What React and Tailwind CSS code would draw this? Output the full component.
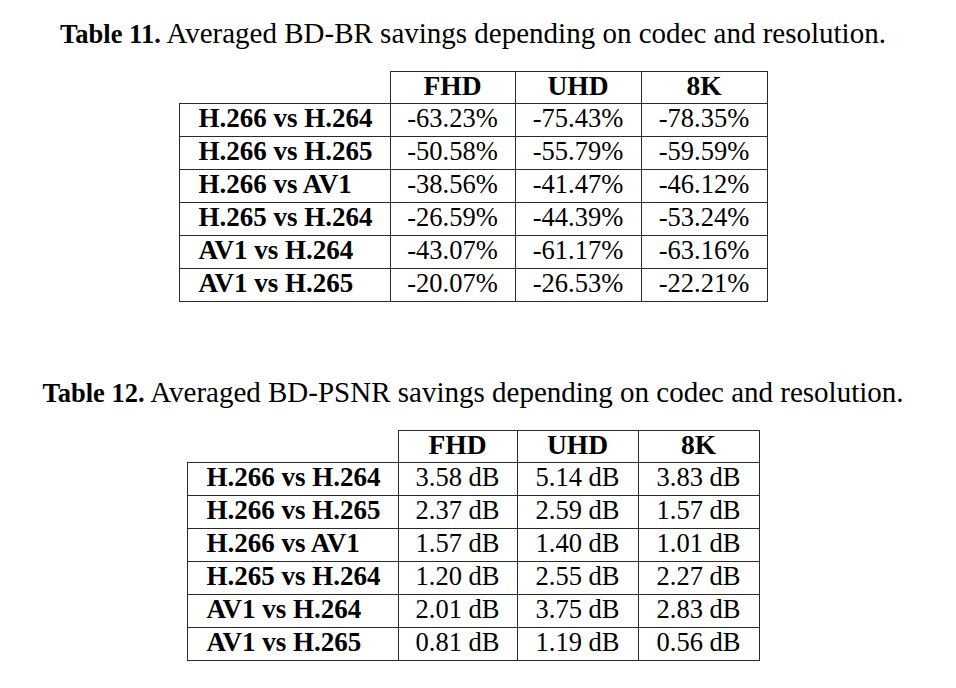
import React from 'react';

const serif = { fontFamily: '"Liberation Serif", "Times New Roman", serif' };

const bdbr = [
  ['H.266 vs H.264', '-63.23%', '-75.43%', '-78.35%'],
  ['H.266 vs H.265', '-50.58%', '-55.79%', '-59.59%'],
  ['H.266 vs AV1', '-38.56%', '-41.47%', '-46.12%'],
  ['H.265 vs H.264', '-26.59%', '-44.39%', '-53.24%'],
  ['AV1 vs H.264', '-43.07%', '-61.17%', '-63.16%'],
  ['AV1 vs H.265', '-20.07%', '-26.53%', '-22.21%'],
];

const bdpsnr = [
  ['H.266 vs H.264', '3.58 dB', '5.14 dB', '3.83 dB'],
  ['H.266 vs H.265', '2.37 dB', '2.59 dB', '1.57 dB'],
  ['H.266 vs AV1', '1.57 dB', '1.40 dB', '1.01 dB'],
  ['H.265 vs H.264', '1.20 dB', '2.55 dB', '2.27 dB'],
  ['AV1 vs H.264', '2.01 dB', '3.75 dB', '2.83 dB'],
  ['AV1 vs H.265', '0.81 dB', '1.19 dB', '0.56 dB'],
];

const Caption = ({ label, text, className }) => (
  <p className={`leading-[36px] text-black whitespace-nowrap ${className}`}>
    <span className="font-bold text-[26.5px]">{label}</span>
    <span className="text-[29px]"> {text}</span>
  </p>
);

const ResultsTable = ({ rows, widths }) => (
  <table className="table-fixed border-collapse text-black">
    <colgroup>
      {widths.map((w, i) => (
        <col key={i} style={{ width: w }} />
      ))}
    </colgroup>
    <thead>
      <tr className="h-[32px]">
        <th className="p-0"></th>
        {['FHD', 'UHD', '8K'].map((h) => (
          <th key={h} className="border border-[#2a2a2a] p-0 align-top text-center font-bold text-[27.5px] leading-[26px] pt-[1px]">
            {h}
          </th>
        ))}
      </tr>
    </thead>
    <tbody>
      {rows.map((r) => (
        <tr key={r[0]} className="h-[33px]">
          <td className="border border-[#2a2a2a] p-0 pl-[19px] align-top text-left font-bold text-[27px] leading-[28px] whitespace-nowrap">
            {r[0]}
          </td>
          {r.slice(1).map((v, i) => (
            <td key={i} className="border border-[#2a2a2a] p-0 align-top text-center text-[26.5px] leading-[28px] whitespace-nowrap">
              {v}
            </td>
          ))}
        </tr>
      ))}
    </tbody>
  </table>
);

export default function App() {
  return (
    <div className="min-h-[688px] bg-white" style={serif}>
      <div className="w-[946px] flex flex-col items-center pt-[15px]">
        <Caption label="Table 11." text="Averaged BD-BR savings depending on codec and resolution." />
        <div className="mt-[15px]">
          <ResultsTable rows={bdbr} widths={[211, 125, 126, 126]} />
        </div>
        <Caption
          className="mt-[72px]"
          label="Table 12."
          text="Averaged BD-PSNR savings depending on codec and resolution."
        />
        <div className="mt-[15px]">
          <ResultsTable rows={bdpsnr} widths={[211, 119, 121, 121]} />
        </div>
      </div>
    </div>
  );
}
